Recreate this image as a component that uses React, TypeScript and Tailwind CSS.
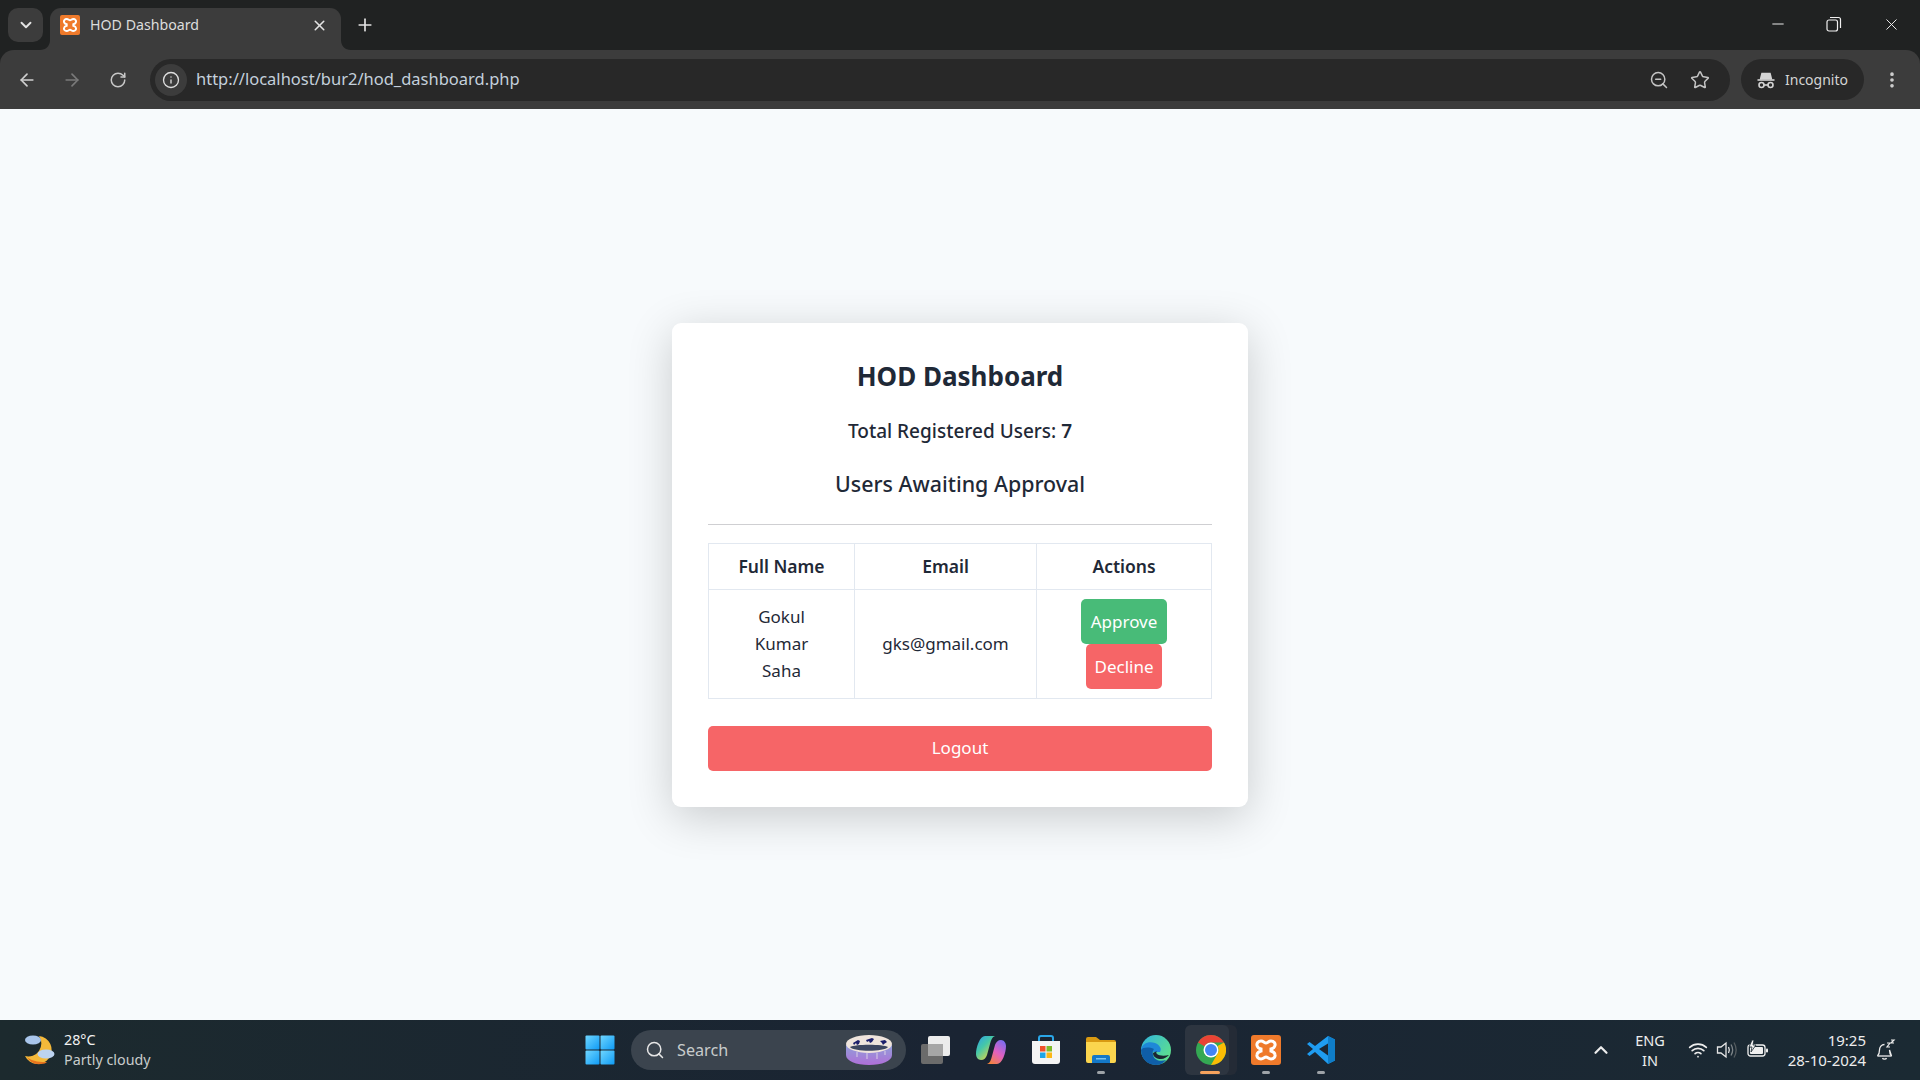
import React from 'react';
import {
  ArrowLeft,
  ArrowRight,
  ChevronDown,
  ChevronUp,
  EllipsisVertical,
  Info,
  Minus,
  Plus,
  RotateCw,
  Search,
  Star,
  Wifi,
  X,
  ZoomOut,
} from 'lucide-react';

const XamppLogo = ({ size = 20 }: { size?: number }) => (
  <svg width={size} height={size} viewBox="0 0 30 30">
    <rect width="30" height="30" rx="3" fill="#ef7a2b" />
    <path
      d="M10 6c-3 0-4.500 2.500-4 4.500.4 1.800 2 3 4 3.500v2c-2 .5-3.600 1.700-4 3.500-.5 2 1 4.500 4 4.500 2.500 0 3.500-2 5-2s2.500 2 5 2c3 0 4.500-2.500 4-4.500-.4-1.800-2-3-4-3.500v-2c2-.5 3.600-1.700 4-3.500.5-2-1-4.500-4-4.500-2.500 0-3.500 2-5 2s-2.500-2-5-2z"
      fill="none"
      stroke="#fff"
      strokeWidth="3"
    />
  </svg>
);

const WindowsLogo = () => (
  <svg width="30" height="30" viewBox="0 0 30 30">
    <defs>
      <linearGradient id="winGrad" x1="0" y1="0" x2="1" y2="1">
        <stop offset="0" stopColor="#6fd6ff" />
        <stop offset="1" stopColor="#0f9bf5" />
      </linearGradient>
    </defs>
    <rect x="0.500" y="0.500" width="14" height="14" rx="1" fill="url(#winGrad)" />
    <rect x="15.500" y="0.500" width="14" height="14" rx="1" fill="url(#winGrad)" />
    <rect x="0.500" y="15.500" width="14" height="14" rx="1" fill="url(#winGrad)" />
    <rect x="15.500" y="15.500" width="14" height="14" rx="1" fill="url(#winGrad)" />
  </svg>
);

const SearchBadge = () => (
  <svg width="48" height="32" viewBox="0 0 48 32">
    <defs>
      <linearGradient id="drum" x1="0" y1="0" x2="0" y2="1">
        <stop offset="0" stopColor="#8f9fd8" />
        <stop offset="1" stopColor="#b06fd8" />
      </linearGradient>
    </defs>
    <path d="M1 11v10c0 6 10 10 23 10s23-4 23-10V11z" fill="url(#drum)" />
    <ellipse cx="24" cy="10" rx="23" ry="9" fill="#efe4dc" />
    <path d="M5 13c4 5 34 5 38 0-5-3-33-3-38 0z" fill="#3d4660" />
    <path d="M8 9l5-3 2 1-1 3-2 1-1-2-2 2zM21 6l6-2 2 1-2 3-2 1-1-2-2 1zM35 7l5-1 2 2-3 2-1 1-1-2z" fill="#1c1f6b" />
    <path d="M12 18v5M22 19v6M32 19v6M40 17v4" stroke="#e8e2ea" strokeWidth="0.800" />
  </svg>
);

const TaskView = () => (
  <svg width="30" height="28" viewBox="0 0 30 28">
    <rect x="0" y="8" width="22" height="20" rx="2" fill="#6b6b6b" />
    <rect x="7" y="0" width="22" height="20" rx="2" fill="#ececec" />
    <rect x="7" y="8" width="15" height="12" fill="#a6a6a6" />
  </svg>
);

const CopilotLogo = () => (
  <svg width="30" height="30" viewBox="0 0 30 30">
    <defs>
      <linearGradient id="copA" x1="0" y1="0" x2="0.800" y2="1">
        <stop offset="0" stopColor="#2f9fe8" />
        <stop offset="0.450" stopColor="#45c8a8" />
        <stop offset="1" stopColor="#f7d838" />
      </linearGradient>
      <linearGradient id="copB" x1="0.800" y1="0" x2="0.200" y2="1">
        <stop offset="0" stopColor="#7a6cf0" />
        <stop offset="0.500" stopColor="#e060c0" />
        <stop offset="1" stopColor="#f4843c" />
      </linearGradient>
    </defs>
    <path d="M9 1h10c-3 1-4 4-5 8l-3 11c-1 3-3 5-6 5-3 0-5-3-5-6C0 12 4 1 9 1z" fill="url(#copA)" />
    <path d="M21 29H11c3-1 4-4 5-8l3-11c1-3 3-5 6-5 3 0 5 3 5 6 0 7-4 18-9 18z" fill="url(#copB)" />
  </svg>
);

const StoreLogo = () => (
  <svg width="30" height="30" viewBox="0 0 30 30">
    <path d="M8 6V3a2 2 0 0 1 2-2h10a2 2 0 0 1 2 2v3" fill="none" stroke="#2aa6e8" strokeWidth="2" />
    <path d="M1 6h28v20a3 3 0 0 1-3 3H4a3 3 0 0 1-3-3z" fill="#f4f4f4" />
    <rect x="9" y="11" width="5.500" height="5.500" fill="#f0502a" />
    <rect x="15.500" y="11" width="5.500" height="5.500" fill="#7fba2a" />
    <rect x="9" y="17.500" width="5.500" height="5.500" fill="#1fa5e8" />
    <rect x="15.500" y="17.500" width="5.500" height="5.500" fill="#fcb716" />
  </svg>
);

const FolderLogo = () => (
  <svg width="30" height="30" viewBox="0 0 30 30">
    <path d="M0 4a2 2 0 0 1 2-2h8l4 3h14a2 2 0 0 1 2 2v4H0z" fill="#d99a12" />
    <path d="M0 7h30v19a2 2 0 0 1-2 2H2a2 2 0 0 1-2-2z" fill="#fbd54e" />
    <path d="M6 22a2 2 0 0 1 2-2h14a2 2 0 0 1 2 2v6H6z" fill="#1478c8" />
    <rect x="10" y="23" width="10" height="1.500" fill="#7cc4f0" />
  </svg>
);

const EdgeLogo = () => (
  <svg width="30" height="30" viewBox="0 0 30 30">
    <defs>
      <linearGradient id="edgeA" x1="0" y1="0" x2="1" y2="0.700">
        <stop offset="0" stopColor="#2fb4e0" />
        <stop offset="1" stopColor="#5fe08a" />
      </linearGradient>
    </defs>
    <circle cx="15" cy="15" r="15" fill="url(#edgeA)" />
    <path d="M0 15C1 8 8 6 14 8c5 2 7 6 5 9h-6c-4-3-10-3-13-2z" fill="#1e88d8" />
    <path d="M0 15c0 9 7 15 15 15 4 0 8-2 10-5-6 2-12 0-13-5-.6-3 0-5 1-6-5-2-11-2-13 1z" fill="#0f5ea8" />
    <path d="M12 18c0 4 4 6 8 6 3 0 6-2 8-4-4 1-10 1-12-1-1-1-1-2 0-3z" fill="#1c2632" />
  </svg>
);

const ChromeLogo = () => (
  <svg width="30" height="30" viewBox="0 0 30 30">
    <circle cx="15" cy="15" r="15" fill="#34a853" />
    <path d="M15 0a15 15 0 0 1 13 7.500H15a7.500 7.500 0 0 0-6.500 3.750L2 7.500A15 15 0 0 1 15 0z" fill="#ea4335" />
    <path d="M28 7.500A15 15 0 0 1 15 30l6.500-11.250A7.500 7.500 0 0 0 21.500 11z" fill="#fbbc04" />
    <circle cx="15" cy="15" r="7.500" fill="#fff" />
    <circle cx="15" cy="15" r="6" fill="#4285f4" />
  </svg>
);

const VsCodeLogo = () => (
  <svg width="30" height="30" viewBox="0 0 30 30">
    <path d="M22 1l7 3.500v21L22 29 9 17l-5.500 4L1 19l6-5-6-5 2.500-2L9 11z" fill="#1f9cf0" />
    <path d="M22 1l7 3.500v21L22 29z" fill="#0f7dc8" />
    <path d="M22 8.500L13 14l9 6.500z" fill="#1c2632" />
  </svg>
);

const IncognitoIcon = () => (
  <svg width="20" height="20" viewBox="0 0 20 20" fill="none" stroke="#d4d4d4" strokeWidth="1.600">
    <path d="M1.500 10h17" />
    <path d="M4.500 9.500L6 3.500h8l1.500 6" fill="#d4d4d4" />
    <circle cx="5.500" cy="15" r="2.500" />
    <circle cx="14.500" cy="15" r="2.500" />
    <path d="M8 15h4" />
  </svg>
);

const WeatherIcon = () => (
  <svg width="32" height="32" viewBox="0 0 32 32">
    <path d="M15 2a14 14 0 1 1-14 20 13 13 0 0 0 14-20z" fill="#f4b93a" />
    <path d="M3 23a14 14 0 0 0 14 7c3 0 5-1 6-2-6 0-14 0-20-5z" fill="#e8741e" />
    <ellipse cx="9" cy="6" rx="8" ry="4.500" fill="#a9c6ec" />
    <ellipse cx="22" cy="20" rx="8.500" ry="4.500" fill="#bcd3f0" />
  </svg>
);

const SpeakerIcon = () => (
  <svg width="22" height="20" viewBox="0 0 22 20" fill="none" stroke="#e6e6e6" strokeWidth="1.300">
    <path d="M1.500 7h3.500L10 3v14l-5-4H1.500z" />
    <path d="M12.500 7c1 1.800 1 4.200 0 6" />
    <path d="M15 4.500c2 3.300 2 7.700 0 11" stroke="#7d8488" />
    <path d="M18 2.500c2.600 4.500 2.600 10.500 0 15" stroke="#555c60" />
  </svg>
);

const BatteryIcon = () => (
  <svg width="22" height="20" viewBox="0 0 22 20" fill="none">
    <rect x="1" y="5" width="17" height="11" rx="2.500" stroke="#f0f0f0" strokeWidth="1.300" />
    <rect x="3" y="7" width="13" height="7" rx="1" fill="#f0f0f0" />
    <rect x="19" y="8.500" width="2" height="4" rx="1" fill="#f0f0f0" />
    <path d="M5 0L2 7h3l-1 5 5-7H6l1-5z" fill="#f0f0f0" stroke="#1b2830" strokeWidth="0.800" />
  </svg>
);

const BellSleepIcon = () => (
  <svg width="20" height="22" viewBox="0 0 20 22" fill="none" stroke="#ededed" strokeWidth="1.300">
    <path d="M1.500 17c1.500-1.500 2-3 2-6 0-3 2-5.500 5-5.500M13.500 11c0 3 .5 4.500 2 6z" />
    <path d="M1.500 17h14" />
    <path d="M6.500 19c.5 1.500 3.500 1.500 4 0" />
    <path d="M11 4h3l-3 4h3M15 1h3l-3 3h3" strokeWidth="1.200" />
  </svg>
);

const TabFoot = ({ className }: { className: string }) => (
  <svg width="10" height="10" viewBox="0 0 10 10" className={className}>
    <path d="M0 10h10V0C10 6 6 10 0 10z" fill="#3c3c3c" />
  </svg>
);

const TaskIcon = ({ children, dot }: { children: React.ReactNode; dot?: boolean }) => (
  <div className="relative flex h-[50px] w-[55px] items-center justify-center">
    {children}
    {dot && <span className="absolute bottom-[1px] left-[24px] h-[3px] w-2 rounded-full bg-[#9ea3a8]" />}
  </div>
);

const ActiveTaskIcon = ({ children }: { children: React.ReactNode }) => (
  <div className="relative flex h-[50px] w-[55px] items-center justify-center">
    <span className="absolute bottom-0 left-[5px] top-0 w-[49px] rounded-md bg-[#242b36]" />
    <span className="absolute bottom-0 left-[2px] top-0 w-[44px] rounded-md bg-[#2d3540]" />
    <span className="relative">{children}</span>
    <span className="absolute bottom-[1px] left-[17px] h-[3px] w-5 rounded-full bg-[#f5a25d]" />
  </div>
);

const TitleBar = () => (
  <div className="flex h-[50px] shrink-0 bg-[#202222] text-[#e3e3e3]">
    <div className="ml-2 mt-2 flex h-[34px] w-[35px] items-center justify-center rounded-[10px] bg-[#3c3c3c]">
      <ChevronDown size={18} strokeWidth={2.500} />
    </div>
    <div className="relative ml-[7px] mt-2 flex h-[42px] w-[291px] items-start rounded-t-[11px] bg-[#3c3c3c] pl-[10px] pt-[7px]">
      <TabFoot className="absolute bottom-0 left-[-10px]" />
      <XamppLogo />
      <span className="ml-[10px] flex-1 text-[14.200px] leading-5 text-[#dcdcdc]">HOD Dashboard</span>
      <X size={17} strokeWidth={2.200} className="mr-[13px] mt-[2px]" />
      <TabFoot className="absolute bottom-0 right-[-10px] -scale-x-100" />
    </div>
    <Plus size={20} strokeWidth={2} className="ml-[14px] mt-[15px]" />
    <div className="flex-1" />
    <div className="flex items-start pt-[15px] text-[#f0f0f0]">
      <Minus size={18} strokeWidth={1.300} />
      <svg width="16" height="16" viewBox="0 0 16 16" fill="none" stroke="#f0f0f0" strokeWidth="1.200" className="ml-[39px] mt-[1px]">
        <rect x="1" y="4" width="10.500" height="11" rx="2" />
        <path d="M4 1.500h8.500a2 2 0 0 1 2 2V12" />
      </svg>
      <X size={19} strokeWidth={1.200} className="ml-[40px] mr-[19px]" />
    </div>
  </div>
);

const AddressBar = () => (
  <div className="flex h-[59px] shrink-0 items-center rounded-t-[14px] bg-[#3c3c3c]">
    <ArrowLeft size={20} strokeWidth={2} className="ml-[17px] text-[#cfcfcf]" />
    <ArrowRight size={20} strokeWidth={2} className="ml-[25px] text-[#7a7a7a]" />
    <RotateCw size={18} strokeWidth={2} className="ml-[27px] text-[#c8c8c8]" />
    <div className="ml-[23px] flex h-[42px] flex-1 items-center rounded-full bg-[#282828]">
      <div className="ml-[5px] flex h-8 w-8 items-center justify-center rounded-full bg-[#3c3c3c]">
        <Info size={18} strokeWidth={1.800} className="text-[#dedede]" />
      </div>
      <span className="ml-[9px] flex-1 text-[16.500px] text-[#c4d0dc]">http://localhost/bur2/hod_dashboard.php</span>
      <ZoomOut size={20} strokeWidth={1.800} className="text-[#c4c4c4]" />
      <Star size={20} strokeWidth={1.800} className="ml-[21px] mr-[20px] text-[#c4c4c4]" />
    </div>
    <div className="ml-[11px] flex h-[41px] w-[123px] items-center rounded-full bg-[#282828] pl-[15px]">
      <IncognitoIcon />
      <span className="ml-[9px] text-[14px] text-[#d4d4d4]">Incognito</span>
    </div>
    <EllipsisVertical size={20} strokeWidth={2.400} className="ml-[18px] mr-[18px] text-[#cfcfcf]" />
  </div>
);

const Card = () => (
  <div className="w-[576px] rounded-[9px] bg-white px-9 pb-9 pt-9 text-center shadow-[0_10px_45px_rgba(0,0,0,0.19)]">
    <h1 className="text-[26px] font-bold leading-[34px] text-[#1f2937]">HOD Dashboard</h1>
    <p className="mt-[26px] text-[19px] font-medium leading-[24px] text-[#1f2937]">
      Total Registered Users: <span className="font-semibold">7</span>
    </p>
    <h2 className="mt-[25px] text-[21.400px] font-medium leading-[32px] text-[#1f2937]">Users Awaiting Approval</h2>
    <hr className="mt-[24px] border-t-[1.500px] border-[#cfcfd2]" />
    <table className="mt-[18px] w-full table-fixed border-collapse text-[17px] leading-[27px] text-[#1f2937]">
      <colgroup>
        <col className="w-[146px]" />
        <col className="w-[182px]" />
        <col className="w-[175px]" />
      </colgroup>
      <thead>
        <tr>
          <th className="border border-[#e2e8f0] p-[9px] text-[17.500px] font-semibold">Full Name</th>
          <th className="border border-[#e2e8f0] p-[9px] text-[17.500px] font-semibold">Email</th>
          <th className="border border-[#e2e8f0] p-[9px] text-[17.500px] font-semibold">Actions</th>
        </tr>
      </thead>
      <tbody>
        <tr>
          <td className="border border-[#e2e8f0] px-[27px] py-[9px]">Gokul Kumar Saha</td>
          <td className="border border-[#e2e8f0] p-[9px]">gks@gmail.com</td>
          <td className="border border-[#e2e8f0] p-[9px]">
            <div className="flex flex-col items-center">
              <button className="h-[45px] w-[86px] rounded-[5px] bg-[#48bb78] text-white">Approve</button>
              <button className="h-[45px] w-[76px] rounded-[5px] bg-[#f66567] text-white">Decline</button>
            </div>
          </td>
        </tr>
      </tbody>
    </table>
    <button className="mt-[27px] h-[45px] w-full rounded-[5px] bg-[#f66567] text-[17px] text-white">Logout</button>
  </div>
);

const Taskbar = () => (
  <div className="flex h-[60px] shrink-0 items-center bg-gradient-to-r from-[#1c2a2e] via-[#1a2433] to-[#1b2a33] text-white">
    <div className="ml-6 flex w-[561px] items-center">
      <WeatherIcon />
      <div className="ml-2 text-[14.300px] leading-[20px]">
        <div className="text-[#f2f2f2]">28°C</div>
        <div className="text-[#c8cccc]">Partly cloudy</div>
      </div>
    </div>
    <WindowsLogo />
    <div className="ml-[16px] flex h-10 w-[275px] items-center rounded-full bg-[#3b444e] pl-[14px]">
      <Search size={20} strokeWidth={1.800} className="text-[#e6e6e6]" />
      <span className="ml-[12px] flex-1 text-[16.200px] text-[#c8cccc]">Search</span>
      <div className="mr-[13px]">
        <SearchBadge />
      </div>
    </div>
    <div className="ml-[2px] flex items-center">
      <TaskIcon><TaskView /></TaskIcon>
      <TaskIcon><CopilotLogo /></TaskIcon>
      <TaskIcon><StoreLogo /></TaskIcon>
      <TaskIcon dot><FolderLogo /></TaskIcon>
      <TaskIcon><EdgeLogo /></TaskIcon>
      <ActiveTaskIcon><ChromeLogo /></ActiveTaskIcon>
      <TaskIcon dot><XamppLogo size={30} /></TaskIcon>
      <TaskIcon dot><VsCodeLogo /></TaskIcon>
    </div>
    <div className="flex-1" />
    <ChevronUp size={22} strokeWidth={2.400} className="text-[#ececec]" />
    <div className="ml-[18px] w-[40px] text-center text-[14.500px] leading-[20px] text-[#ededed]">
      <div>ENG</div>
      <div>IN</div>
    </div>
    <Wifi size={20} strokeWidth={2} className="ml-[18px] text-[#ededed]" />
    <div className="ml-[8px]"><SpeakerIcon /></div>
    <div className="ml-[9px]"><BatteryIcon /></div>
    <div className="ml-[13px] w-[84px] whitespace-nowrap text-right text-[15px] leading-[20px] text-[#ededed]">
      <div>19:25</div>
      <div>28-10-2024</div>
    </div>
    <div className="ml-[10px] mr-[24px]"><BellSleepIcon /></div>
  </div>
);

const App = () => {
  return (
    <div className="flex h-screen w-full flex-col bg-[#202222] font-['Noto_Sans','Open_Sans',sans-serif]">
      <TitleBar />
      <AddressBar />
      <main className="flex flex-1 items-center justify-center bg-[#f7fafc]">
        <Card />
      </main>
      <Taskbar />
    </div>
  );
};

export default App;
